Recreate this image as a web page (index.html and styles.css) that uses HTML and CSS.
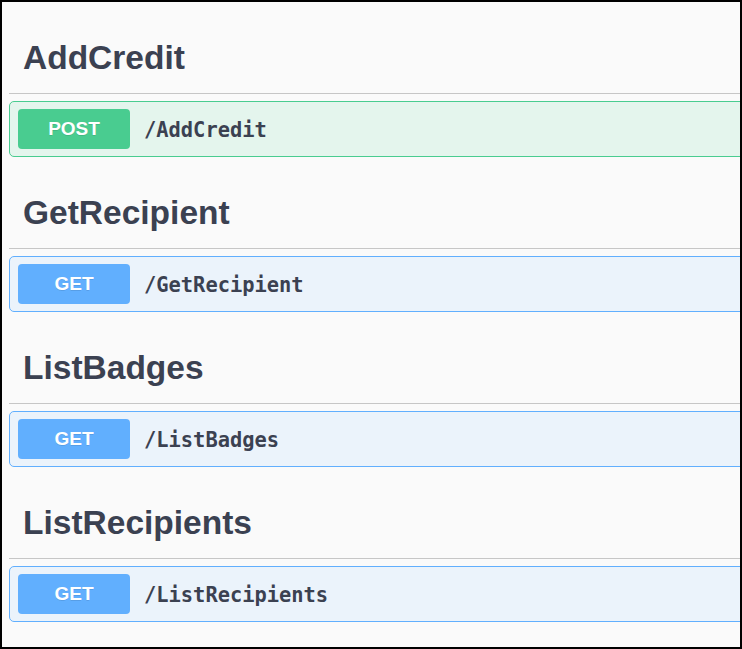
FILE: index.html
```html
<!DOCTYPE html>
<html lang="en">
<head>
<meta charset="utf-8">
<title>API operations</title>
<link rel="stylesheet" href="styles.css">
</head>
<body>
<div class="frame">
  <div class="content">
    <section class="tag-section">
      <h3 class="tag">AddCredit</h3>
      <div class="opblock post">
        <span class="method">POST</span>
        <span class="path">/AddCredit</span>
      </div>
    </section>
    <section class="tag-section">
      <h3 class="tag">GetRecipient</h3>
      <div class="opblock get">
        <span class="method">GET</span>
        <span class="path">/GetRecipient</span>
      </div>
    </section>
    <section class="tag-section">
      <h3 class="tag">ListBadges</h3>
      <div class="opblock get">
        <span class="method">GET</span>
        <span class="path">/ListBadges</span>
      </div>
    </section>
    <section class="tag-section">
      <h3 class="tag">ListRecipients</h3>
      <div class="opblock get">
        <span class="method">GET</span>
        <span class="path">/ListRecipients</span>
      </div>
    </section>
  </div>
</div>
</body>
</html>
```

FILE: styles.css
```css
html, body {
  margin: 0;
  padding: 0;
  background: #fafafa;
}

.frame {
  box-sizing: border-box;
  width: 742px;
  height: 649px;
  border: 2px solid #000;
  background: #fafafa;
  overflow: hidden;
}

.content {
  width: 900px;
  padding-left: 7px;
}

.tag-section {
  display: block;
}

.tag {
  margin: 0 0 7px 0;
  padding: 34px 28px 14px 14px;
  border-bottom: 1px solid #c6c6c6;
  font-family: "Liberation Sans", Arial, sans-serif;
  font-weight: 700;
  font-size: 33.5px;
  line-height: 43px;
  color: #3b4151;
}

.opblock {
  box-sizing: border-box;
  height: 56px;
  display: flex;
  align-items: center;
  padding: 7px 8px;
  border: 1px solid;
  border-radius: 5px;
}

.opblock.post {
  background: #e4f5ed;
  border-color: #49cc90;
}

.opblock.get {
  background: #ebf3fb;
  border-color: #61affe;
}

.method {
  box-sizing: border-box;
  width: 112px;
  height: 40px;
  display: flex;
  align-items: center;
  justify-content: center;
  border-radius: 4px;
  font-family: "Liberation Sans", Arial, sans-serif;
  font-weight: 700;
  font-size: 19px;
  color: #fff;
  text-shadow: 0 1px 0 rgba(0, 0, 0, 0.1);
}

.post .method {
  background: #49cc90;
}

.get .method {
  background: #61affe;
}

.path {
  padding: 2px 14px 0;
  font-family: "DejaVu Sans Mono", "Liberation Mono", monospace;
  font-weight: 700;
  font-size: 20.4px;
  color: #3b4151;
}
```
